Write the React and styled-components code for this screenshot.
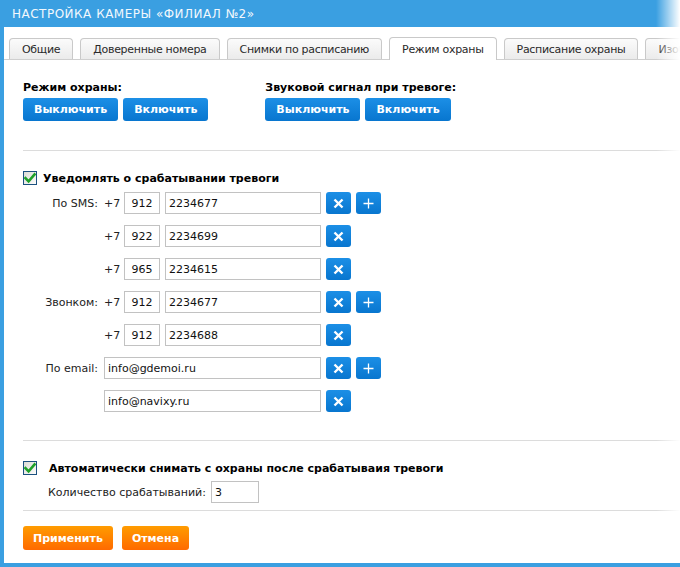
import styled, { createGlobalStyle } from "styled-components";

const GlobalStyle = createGlobalStyle`
	html, body {
		margin: 0;
		padding: 0;
		background: #ffffff;
	}
	body {
		font-family: "DejaVu Sans", Verdana, sans-serif;
		font-size: 11px;
		color: #000;
	}
`;

const frame_blue = "#3a9fe1";

const tabs = [
	{ title: "Общие" },
	{ title: "Доверенные номера" },
	{ title: "Снимки по расписанию" },
	{ title: "Режим охраны", active: true },
	{ title: "Расписание охраны" },
	{ title: "Изображение" },
];

const contacts = [
	{ label: "По SMS:", code: "912", number: "2234677", add: true },
	{ code: "922", number: "2234699" },
	{ code: "965", number: "2234615" },
	{ label: "Звонком:", code: "912", number: "2234677", add: true },
	{ code: "912", number: "2234688" },
	{ label: "По email:", email: "info@gdemoi.ru", add: true },
	{ email: "info@navixy.ru" },
];

const CheckIcon = () => (
	<svg width="12" height="12" viewBox="0 0 12 12">
		<path
			d="M1.5 6.2 L4.6 9.4 L10.6 2.4"
			fill="none"
			stroke="#1fa12a"
			strokeWidth="2.6"
			strokeLinecap="square"
		/>
	</svg>
);

const CrossIcon = () => (
	<svg width="11" height="11" viewBox="0 0 11 11">
		<path d="M1.5 1.5 L9.5 9.5 M9.5 1.5 L1.5 9.5" stroke="#fff" strokeWidth="2.4" />
	</svg>
);

const PlusIcon = () => (
	<svg width="11" height="11" viewBox="0 0 11 11">
		<path d="M5.5 0.5 V10.5 M0.5 5.5 H10.5" stroke="#fff" strokeWidth="1.3" />
	</svg>
);

const ContactRow = ({ contact }) => {
	const { label, code, number, email, add } = contact;

	return (
		<>
			<RowLabel>{label}</RowLabel>
			<RowFields>
				{email ? (
					<Input $w={217} defaultValue={email} />
				) : (
					<>
						<Prefix>+7</Prefix>
						<Input $w={36} $center defaultValue={code} />
						<Input $w={156} defaultValue={number} />
					</>
				)}
				<IconButton>
					<CrossIcon />
				</IconButton>
				{add && (
					<IconButton>
						<PlusIcon />
					</IconButton>
				)}
			</RowFields>
		</>
	);
};

const App = () => {
	return (
		<>
			<GlobalStyle />
			<Window>
				<Header>Настройка камеры «Филиал №2»</Header>
				<TabBar>
					{tabs.map((tab) => (
						<Tab key={tab.title} $active={tab.active}>
							{tab.title}
						</Tab>
					))}
				</TabBar>
				<Content>
					<ModeSection>
						<ModeGroup>
							<GroupTitle>Режим охраны:</GroupTitle>
							<Buttons>
								<BlueButton>Выключить</BlueButton>
								<BlueButton>Включить</BlueButton>
							</Buttons>
						</ModeGroup>
						<ModeGroup>
							<GroupTitle>Звуковой сигнал при тревоге:</GroupTitle>
							<Buttons>
								<BlueButton>Выключить</BlueButton>
								<BlueButton>Включить</BlueButton>
							</Buttons>
						</ModeGroup>
					</ModeSection>
					<Divider $top={29} />
					<CheckRow $gap={6} $top={20}>
						<CheckBox>
							<CheckIcon />
						</CheckBox>
						<CheckLabel>Уведомлять о срабатывании тревоги</CheckLabel>
					</CheckRow>
					<ContactGrid>
						{contacts.map((contact, i) => (
							<ContactRow key={i} contact={contact} />
						))}
					</ContactGrid>
					<Divider $top={28} />
					<CheckRow $gap={12} $top={20}>
						<CheckBox>
							<CheckIcon />
						</CheckBox>
						<CheckLabel>Автоматически снимать с охраны после срабатываия тревоги</CheckLabel>
					</CheckRow>
					<CountRow>
						<CountLabel>Количество срабатываний:</CountLabel>
						<Input $w={48} defaultValue="3" />
					</CountRow>
					<Divider $top={7} />
					<Footer>
						<OrangeButton>Применить</OrangeButton>
						<OrangeButton>Отмена</OrangeButton>
					</Footer>
				</Content>
				<Fade />
			</Window>
		</>
	);
};

export default App;

const Window = styled.div`
	position: relative;
	width: 680px;
	height: 567px;
	box-sizing: border-box;
	border-left: 4px solid ${frame_blue};
	border-bottom: 4px solid ${frame_blue};
	background: #fff;
	overflow: hidden;
`;

const Header = styled.div`
	height: 27px;
	margin-left: -4px;
	padding-left: 12px;
	display: flex;
	align-items: center;
	background: ${frame_blue};
	color: #f2f8fd;
	font-size: 12px;
	text-transform: uppercase;
	letter-spacing: 0.5px;
`;

const TabBar = styled.div`
	display: flex;
	align-items: flex-end;
	gap: 7px;
	height: 22px;
	margin-top: 10px;
	padding-left: 5px;
	border-bottom: 1px solid #cfcfcf;
	white-space: nowrap;
`;

const Tab = styled.div`
	flex-shrink: 0;
	box-sizing: border-box;
	height: ${(props) => (props.$active ? "23px" : "21px")};
	margin-bottom: ${(props) => (props.$active ? "-1px" : "0")};
	padding: 0 12px;
	display: flex;
	align-items: center;
	border: 1px solid #c9c9c9;
	border-bottom: none;
	border-radius: 4px 4px 0 0;
	background: ${(props) => (props.$active ? "#fff" : "linear-gradient(#fbfbfb, #ebebeb)")};
	color: #2a2a2a;
	font-size: 11px;
	letter-spacing: -0.3px;
`;

const Content = styled.div`
	padding-left: 19px;
`;

const ModeSection = styled.div`
	display: flex;
	gap: 57px;
	padding-top: 21px;
`;

const ModeGroup = styled.div`
	display: flex;
	flex-direction: column;
	gap: 3px;
`;

const GroupTitle = styled.div`
	font-weight: 700;
	line-height: 14px;
`;

const Buttons = styled.div`
	display: flex;
	gap: 5px;
`;

const BlueButton = styled.button`
	height: 23px;
	padding: 0 11px;
	border: none;
	border-radius: 3px;
	background: linear-gradient(#1c8fe6, #0876cf);
	color: #fff;
	font-family: "DejaVu Sans", Verdana, sans-serif;
	font-weight: 700;
	font-size: 11px;
`;

const Divider = styled.div`
	height: 1px;
	margin-top: ${(props) => props.$top}px;
	background: #dcdcdc;
`;

const CheckRow = styled.div`
	display: flex;
	align-items: center;
	gap: ${(props) => props.$gap}px;
	margin-top: ${(props) => props.$top}px;
	height: 14px;
`;

const CheckBox = styled.span`
	box-sizing: border-box;
	width: 14px;
	height: 14px;
	display: flex;
	align-items: center;
	justify-content: center;
	border: 1px solid #1c5180;
	background: linear-gradient(135deg, #dcdcd6, #fbfbfb);
`;

const CheckLabel = styled.span`
	font-weight: 700;
`;

const ContactGrid = styled.div`
	display: grid;
	grid-template-columns: 75px max-content;
	column-gap: 6px;
	row-gap: 11px;
	margin-top: 7px;
`;

const RowLabel = styled.div`
	display: flex;
	align-items: center;
	justify-content: flex-end;
	color: #222;
`;

const RowFields = styled.div`
	display: flex;
	align-items: center;
	gap: 5px;
	height: 22px;
`;

const Prefix = styled.span`
	flex-shrink: 0;
	width: 15px;
	color: #222;
	font-size: 11px;
`;

const Input = styled.input`
	flex-shrink: 0;
	box-sizing: border-box;
	width: ${(props) => props.$w}px;
	height: 22px;
	padding: 0 3px;
	border: 1px solid #c2c2c2;
	font-family: "DejaVu Sans", Verdana, sans-serif;
	font-size: 11px;
	color: #111;
	text-align: ${(props) => (props.$center ? "center" : "left")};
	outline: none;
`;

const IconButton = styled.button`
	flex-shrink: 0;
	width: 25px;
	height: 22px;
	padding: 0;
	display: flex;
	align-items: center;
	justify-content: center;
	border: none;
	border-radius: 3px;
	background: linear-gradient(#1c8fe6, #0876cf);
`;

const CountRow = styled.div`
	display: flex;
	align-items: center;
	gap: 5px;
	margin-top: 6px;
	padding-left: 25px;
`;

const CountLabel = styled.span`
	color: #222;
`;

const Footer = styled.div`
	display: flex;
	gap: 9px;
	margin-top: 15px;
`;

const OrangeButton = styled.button`
	height: 24px;
	padding: 0 10px;
	border: none;
	border-radius: 3px;
	background: linear-gradient(#ff9c00, #ff6a00);
	color: #fff;
	font-family: "DejaVu Sans", Verdana, sans-serif;
	font-weight: 700;
	font-size: 11px;
`;

const Fade = styled.div`
	position: absolute;
	top: 0;
	right: 0;
	width: 24px;
	height: 100%;
	background: linear-gradient(to right, rgba(255, 255, 255, 0), #fff);
	pointer-events: none;
`;
